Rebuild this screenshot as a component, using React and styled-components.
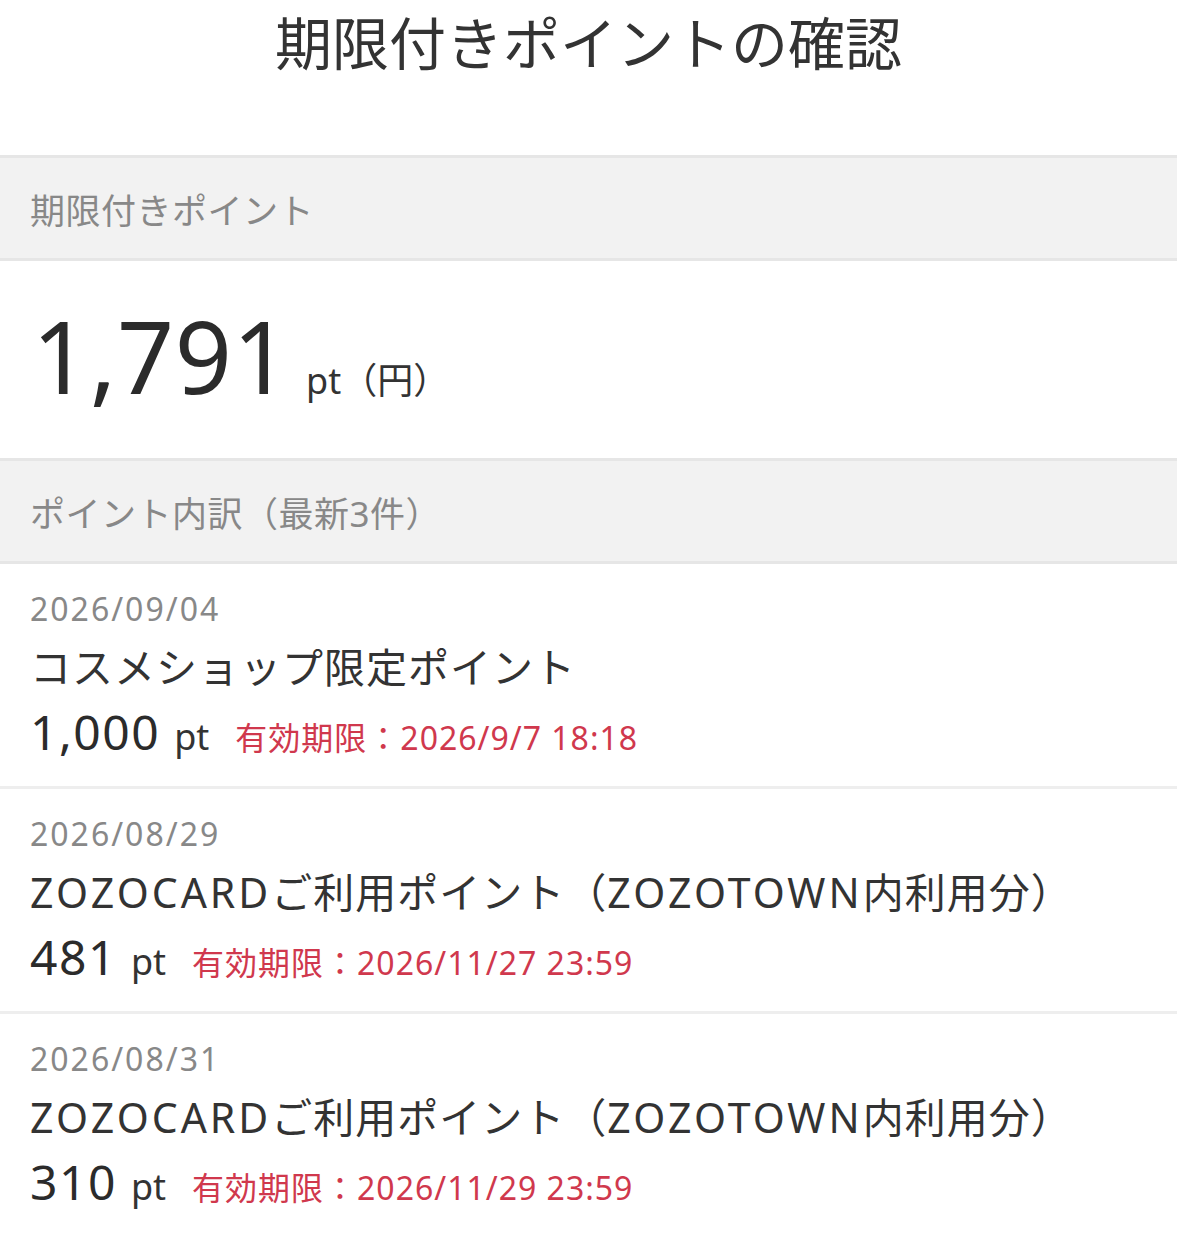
import React from "react";
import styled, { createGlobalStyle } from "styled-components";

const GlobalStyle = createGlobalStyle`
  body {
    margin: 0;
    background: #fff;
    font-family: "Noto Sans", "Noto Sans CJK JP", sans-serif;
    color: #333;
  }
`;

const items = [
  {
    date: "2026/09/04",
    name: "コスメショップ限定ポイント",
    amount: "1,000",
    limit: "2026/9/7 18:18",
  },
  {
    date: "2026/08/29",
    name: "ZOZOCARDご利用ポイント（ZOZOTOWN内利用分）",
    amount: "481",
    limit: "2026/11/27 23:59",
  },
  {
    date: "2026/08/31",
    name: "ZOZOCARDご利用ポイント（ZOZOTOWN内利用分）",
    amount: "310",
    limit: "2026/11/29 23:59",
  },
];

// latin runs are a bit wider in the original font, so give them extra spacing
const renderName = (name) =>
  name.split(/([A-Za-z0-9]+)/).map((part, i) =>
    /^[A-Za-z0-9]+$/.test(part) ? <Latin key={i}>{part}</Latin> : part
  );

const App = () => {
  return (
    <Page>
      <GlobalStyle />
      <Title>期限付きポイントの確認</Title>
      <SectionHead>期限付きポイント</SectionHead>
      <Total>
        <TotalNum>1,791</TotalNum>
        <TotalUnit>pt（円）</TotalUnit>
      </Total>
      <SectionHead>ポイント内訳（最新3件）</SectionHead>
      <List>
        {items.map((it, i) => (
          <Item key={i}>
            <DateText>{it.date}</DateText>
            <Name>{renderName(it.name)}</Name>
            <AmountRow>
              <Amount>{it.amount}</Amount>
              <Unit>pt</Unit>
              <Limit>有効期限：{it.limit}</Limit>
            </AmountRow>
          </Item>
        ))}
      </List>
    </Page>
  );
};

const Page = styled.div`
  width: 100%;
`;

const Title = styled.h1`
  margin: 0;
  height: 155px;
  padding-top: 10px;
  box-sizing: border-box;
  text-align: center;
  font-size: 57px;
  font-weight: 400;
  line-height: 66px;
  color: #333;
`;

const SectionHead = styled.div`
  display: flex;
  align-items: center;
  height: 100px;
  padding: 0 30px;
  background: #f2f2f2;
  border-top: 3px solid #e6e6e6;
  border-bottom: 3px solid #e6e6e6;
  font-size: 35px;
  letter-spacing: 0.5px;
  color: #888;
`;

const Total = styled.div`
  display: flex;
  align-items: baseline;
  height: 197px;
  padding: 24px 32px 0;
  box-sizing: border-box;
`;

const TotalNum = styled.span`
  font-size: 100px;
  line-height: 140px;
  color: #2b2b2b;
  letter-spacing: 0.5px;
`;

const TotalUnit = styled.span`
  margin-left: 16px;
  font-size: 36px;
  color: #333;
`;

const List = styled.div`
  display: flex;
  flex-direction: column;
`;

const Item = styled.div`
  padding: 27px 30px 20px;
  border-bottom: 3px solid #eeeeee;
`;

const DateText = styled.div`
  font-size: 32px;
  line-height: 36px;
  letter-spacing: 2px;
  color: #888;
`;

const Name = styled.div`
  margin-top: 14px;
  font-size: 41px;
  line-height: 52px;
  letter-spacing: 1px;
  color: #333;
`;

const Latin = styled.span`
  letter-spacing: 3px;
`;

const AmountRow = styled.div`
  display: flex;
  align-items: baseline;
  margin-top: 11px;
  line-height: 56px;
`;

const Amount = styled.span`
  font-size: 48px;
  letter-spacing: 1.5px;
  color: #2b2b2b;
`;

const Unit = styled.span`
  margin-left: 14px;
  font-size: 36px;
  color: #333;
`;

const Limit = styled.span`
  margin-left: 26px;
  font-size: 32px;
  letter-spacing: 1px;
  color: #d0384d;
`;

export default App;
